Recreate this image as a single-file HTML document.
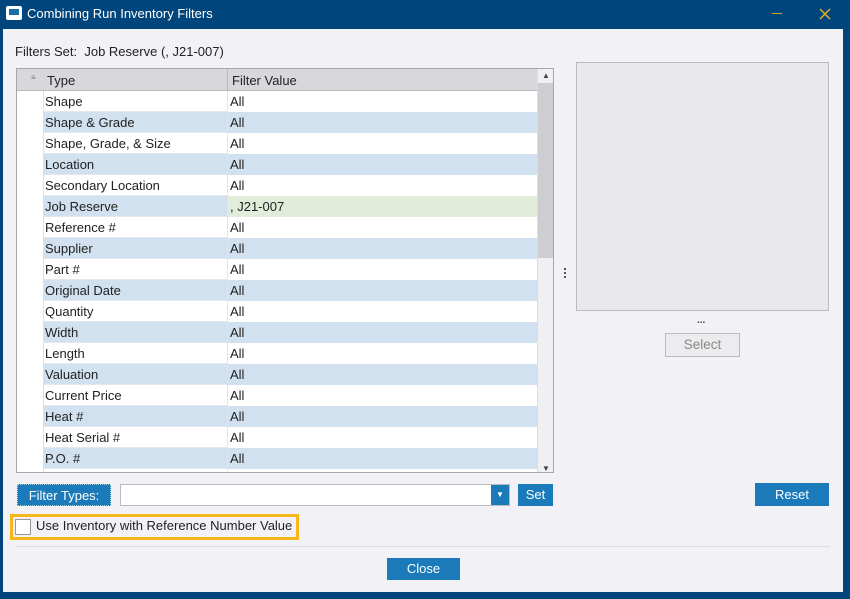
<!DOCTYPE html>
<html><head><style>
*{margin:0;padding:0;box-sizing:border-box}
body{width:850px;height:599px;background:#00457c;font-family:"Liberation Sans",sans-serif;font-size:13px;color:#222;position:relative;overflow:hidden}
.a{position:absolute}
.body{left:3px;top:29px;width:840px;height:563px;background:#f2f2f6}
.title{left:27px;top:6px;color:#fff;font-size:13px}
.grid{left:16px;top:68px;width:538px;height:405px;background:#fff;border:1px solid #a8a8a8;overflow:hidden}
.row{position:absolute;left:0;width:520px;height:21px;border-bottom:1px solid #e4e8ee}
.c1{position:absolute;left:0;width:27px;height:21px;background:#fff;border-right:1px solid #dde}
.c2{position:absolute;left:28px;top:3px}
.c3{position:absolute;left:210px;top:0;width:310px;height:21px;padding:3px 0 0 0;border-left:1px solid #e0e4ea}
.btn{position:absolute;background:#1b7ab9;color:#fff;text-align:center;font-size:13px}
</style></head><body>
<div class="a body"></div>
<div class="a" style="left:6px;top:6px;width:16px;height:14px;background:#fff;border-radius:2px"><div style="margin:3px 3px;width:10px;height:6px;background:#1b6fa8"></div></div>
<div class="a title">Combining Run Inventory Filters</div>
<div class="a" style="left:772px;top:13px;width:10px;height:1px;background:#d5a21c"></div>
<svg class="a" style="left:819px;top:8px" width="12" height="12"><path d="M1 1L11 11M11 1L1 11" stroke="#e0b020" stroke-width="1.5"/></svg>
<div class="a" style="left:15px;top:44px">Filters Set:&nbsp; Job Reserve (, J21-007)</div>
<div class="a grid">
<div class="row" style="top:0;background:#d8d8dc;height:22px;border-bottom:1px solid #bbb"><div style="position:absolute;left:14px;top:4px;font-size:8px;color:#777">≡</div><div class="c2" style="top:4px;left:30px">Type</div><div class="c3" style="padding-top:4px;padding-left:4px;border-left:1px solid #bbb;height:22px">Filter Value</div></div>
<div id="rows"></div>
<div style="position:absolute;left:520px;top:0;width:17px;height:405px;background:#f0f0f2;border-left:1px solid #ddd"><div style="position:absolute;left:4px;top:2px;font-size:8px;color:#444">▲</div><div style="position:absolute;left:0;top:14px;width:17px;height:175px;background:#cdcdd2"></div><div style="position:absolute;left:4px;bottom:1px;font-size:8px;color:#444">▼</div></div>
</div>
<script>
var t=["Shape","Shape & Grade","Shape, Grade, & Size","Location","Secondary Location","Job Reserve","Reference #","Supplier","Part #","Original Date","Quantity","Width","Length","Valuation","Current Price","Heat #","Heat Serial #","P.O. #","x"];
var h="";for(var i=0;i<t.length;i++){var bg=i%2?"#d1e1ef":"#fff";var v=i==5?", J21-007":"All";var vb=i==5?"#e2ecda":bg;
h+='<div class="row" style="top:'+(22+i*21)+'px;background:'+bg+'"><div class="c1"></div><div class="c2">'+(i<18?t[i]:"")+'</div><div class="c3" style="background:'+vb+';padding-left:2px">'+(i<18?v:"")+'</div></div>';}
document.getElementById("rows").innerHTML=h;
</script>
<div class="a" style="left:564px;top:268px;width:2px;height:10px;border-left:2px dotted #555"></div>
<div class="a" style="left:576px;top:62px;width:253px;height:249px;background:#e8e8ed;border:1px solid #bbb"></div>
<div class="a" style="left:697px;top:315px;font-size:10px;font-weight:bold;color:#444">...</div>
<div class="a" style="left:665px;top:333px;width:75px;height:24px;border:1px solid #bbb;background:#ececef;color:#888;text-align:center;line-height:22px;font-size:13.5px">Select</div>
<div class="btn" style="left:17px;top:484px;width:94px;height:22px;line-height:22px;border:1px dotted #9cc">Filter Types:</div>
<div class="a" style="left:120px;top:484px;width:390px;height:22px;background:#fff;border:1px solid #bbb"></div>
<div class="btn" style="left:491px;top:485px;width:18px;height:20px;font-size:8px;line-height:20px">▼</div>
<div class="btn" style="left:518px;top:484px;width:35px;height:22px;line-height:22px">Set</div>
<div class="btn" style="left:755px;top:483px;width:74px;height:23px;line-height:23px">Reset</div>
<div class="a" style="left:10px;top:514px;width:289px;height:26px;border:3px solid #f5b818"></div>
<div class="a" style="left:15px;top:519px;width:16px;height:16px;background:#fff;border:1px solid #999"></div>
<div class="a" style="left:36px;top:518px;font-size:13px">Use Inventory with Reference Number Value</div>
<div class="a" style="left:15px;top:546px;width:815px;height:1px;background:#dcdce2"></div>
<div class="btn" style="left:387px;top:558px;width:73px;height:22px;line-height:22px">Close</div>
</body></html>
